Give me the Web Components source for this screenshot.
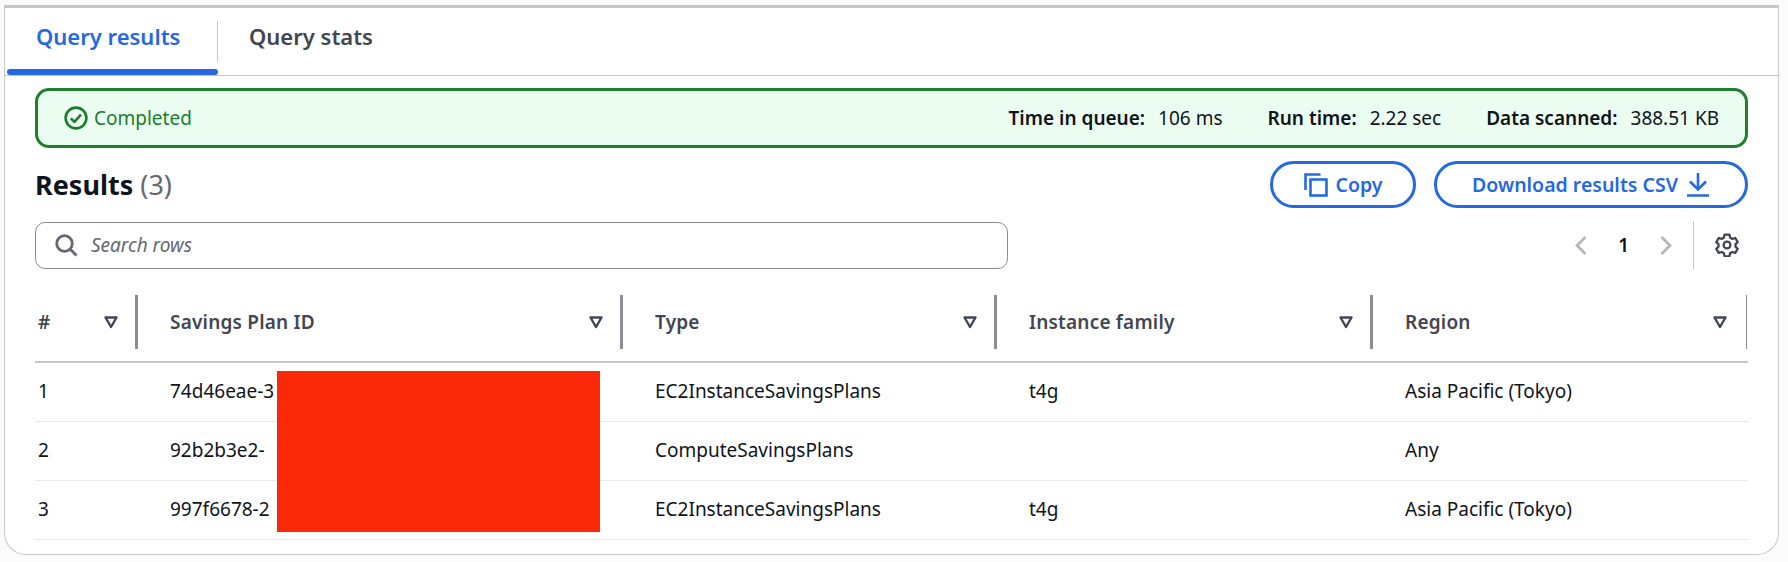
<!DOCTYPE html>
<html lang="en">
<head>
<meta charset="utf-8">
<title>Query results</title>
<style>
  html, body { margin: 0; background: #fbfbfb; }
  body { font-family: "Noto Sans", "Open Sans", sans-serif; color: #0f141a; }
</style>
</head>
<body>
<results-panel>
  <query-tabs slot="tabs">
    <tab-item active>Query results</tab-item>
    <tab-item>Query stats</tab-item>
  </query-tabs>
  <status-flash>
    <flash-stat label="Time in queue:">106 ms</flash-stat>
    <flash-stat label="Run time:">2.22 sec</flash-stat>
    <flash-stat label="Data scanned:">388.51 KB</flash-stat>
  </status-flash>
  <results-header count="3">
    <pill-button icon="copy" style="width:146px">Copy</pill-button>
    <pill-button icon="download" style="width:314px">Download results CSV</pill-button>
  </results-header>
  <table-toolbar></table-toolbar>
  <results-table></results-table>
</results-panel>

<script>
// small helper, every component goes through it
function shadow(el, html) {
  const root = el.attachShadow({ mode: "open" });
  const t = document.createElement("template");
  t.innerHTML = html;
  root.append(t.content.cloneNode(true));
  return root;
}

class ResultsPanel extends HTMLElement {
  constructor() {
    super();
    shadow(this, `
      <style>
        :host {
          display: block; box-sizing: border-box;
          width: 1775px; height: 550px; margin: 5px 0 0 4px;
          background: #fff;
          border: 1px solid #c6c6cd; border-top: 3px solid #c6c6cd;
          border-radius: 0 0 22px 22px;
          position: relative;
        }
      </style>
      <slot name="tabs"></slot>
      <slot></slot>
    `);
  }
}

class QueryTabs extends HTMLElement {
  constructor() {
    super();
    shadow(this, `
      <style>
        :host {
          display: flex; height: 68px; box-sizing: border-box;
          padding-left: 2px; border-bottom: 1px solid #c6c6cd;
        }
      </style>
      <slot></slot>
    `);
  }
}

class TabItem extends HTMLElement {
  constructor() {
    super();
    shadow(this, `
      <style>
        :host {
          display: flex; align-items: center; box-sizing: border-box;
          height: 67px; padding: 0 0 12px 0;
          font-size: 22px; font-weight: 600; color: #424650;
          position: relative;
        }
        :host(:first-child) { width: 211px; padding-left: 29px; }
        :host(:not(:first-child)) { padding-left: 31px; }
        :host([active]) { color: #2469e0; }
        :host([active])::before {
          content: ""; position: absolute; left: 0; right: 0; bottom: 0;
          height: 6px; border-radius: 3px; background: #2469e0;
        }
        :host([active])::after {
          content: ""; position: absolute; right: 0; top: 13px;
          height: 41px; width: 1px; background: #c6c6cd;
        }
      </style>
      <slot></slot>
    `);
  }
}

class StatusFlash extends HTMLElement {
  constructor() {
    super();
    shadow(this, `
      <style>
        :host {
          display: flex; align-items: center; box-sizing: border-box;
          height: 60px; margin: 12px 30px 0 30px; padding: 0 26px 0 26px;
          background: #ebfdf0; border: 3px solid #1f7f2e; border-radius: 14px;
          font-size: 19px; color: #0f141a;
        }
        .done { display: flex; align-items: center; gap: 6px; color: #1b7d2b; flex: 1; }
        svg { width: 24px; height: 24px; display: block; }
        .stats { display: flex; gap: 45px; }
      </style>
      <div class="done">
        <svg viewBox="0 0 24 24" fill="none" stroke="#1b7d2b" stroke-width="2.6">
          <circle cx="12" cy="12" r="10.4"/>
          <path d="M6.8 12.3l3.6 3.6 6.6-7.2" stroke-linejoin="round"/>
        </svg>
        <span>Completed</span>
      </div>
      <div class="stats"><slot></slot></div>
    `);
  }
}

class FlashStat extends HTMLElement {
  constructor() {
    super();
    shadow(this, `
      <style>
        :host { display: inline-flex; gap: 13px; white-space: nowrap; }
        b { font-weight: 600; }
      </style>
      <b>${this.getAttribute("label")}</b><span><slot></slot></span>
    `);
  }
}

class ResultsHeader extends HTMLElement {
  constructor() {
    super();
    shadow(this, `
      <style>
        :host {
          display: flex; align-items: center; height: 47px;
          margin: 13px 30px 0 30px; gap: 18px;
        }
        h2 { flex: 1; margin: 0; font-size: 27px; font-weight: 700; color: #0f141a; }
        h2 span { font-weight: 400; color: #656871; }
      </style>
      <h2>Results <span>(${this.getAttribute("count")})</span></h2>
      <slot></slot>
    `);
  }
}

const pillIcons = {
  copy: `<svg viewBox="0 0 24 24" fill="none" stroke="#2469e0" stroke-width="2.6">
      <path d="M1.5 17V1.5h15"/><rect x="6.5" y="6.5" width="16" height="16"/></svg>`,
  download: `<svg viewBox="0 0 24 24" fill="none" stroke="#2469e0" stroke-width="2.6">
      <path d="M12 0v15M4 8.5l8 8 8-8M1 22.5h22"/></svg>`
};

class PillButton extends HTMLElement {
  constructor() {
    super();
    const icon = this.getAttribute("icon");
    shadow(this, `
      <style>
        :host {
          display: flex; align-items: center; justify-content: center; box-sizing: border-box;
          height: 47px; gap: 8px; flex: none;
          border: 3px solid #2469e0; border-radius: 24px; background: #fff;
          color: #2469e0; font-size: 19.5px; font-weight: 600; white-space: nowrap;
        }
        svg { width: 24px; height: 24px; display: block; }
        .copy { order: -1; margin-right: 5px; }
      </style>
      <span class="${icon}" style="display:contents"></span>
      ${icon === "copy" ? pillIcons.copy : ""}
      <slot></slot>
      ${icon === "download" ? pillIcons.download : ""}
    `);
  }
}

class TableToolbar extends HTMLElement {
  constructor() {
    super();
    shadow(this, `
      <style>
        :host {
          display: flex; align-items: center; height: 48px;
          margin: 13px 30px 0 30px;
        }
        .search {
          width: 973px; height: 47px; box-sizing: border-box;
          display: flex; align-items: center; gap: 13px; padding-left: 19px;
          border: 1px solid #8c8c94; border-radius: 10px;
          font-size: 19px; font-style: italic; color: #656871;
        }
        .search svg { width: 23px; height: 23px; }
        .pager { margin-left: auto; display: flex; align-items: center; height: 48px; }
        .pager span { width: 42px; text-align: center; font-size: 19px; font-weight: 600; margin: 0 21px; width: auto; color: #0f141a; padding: 0 10px; }
        .pager svg.chev { width: 12px; height: 19px; }
        .sep { width: 1px; height: 48px; background: #c6c6cd; margin: 0 21px; }
        .gear { width: 24px; height: 24px; margin-right: 9px; }
      </style>
      <div class="search">
        <svg viewBox="0 0 23 23" fill="none" stroke="#656871" stroke-width="2.8">
          <circle cx="9.5" cy="9.5" r="7.8"/><path d="M15 15l6.5 6.5"/>
        </svg>
        <span>Search rows</span>
      </div>
      <div class="pager">
        <svg class="chev" viewBox="0 0 12 19" fill="none" stroke="#b4b4bb" stroke-width="2.6"><path d="M10.5 1L2 9.5l8.5 8.5"/></svg>
        <span>1</span>
        <svg class="chev" viewBox="0 0 12 19" fill="none" stroke="#b4b4bb" stroke-width="2.6"><path d="M1.5 1L10 9.5 1.5 18"/></svg>
        <div class="sep"></div>
        <svg class="gear" viewBox="0 0 24 24" fill="none" stroke="#424650" stroke-width="2.3" stroke-linejoin="round">
          <circle cx="12" cy="12" r="3.4"/>
          <path d="M9.6 1.6h4.8l.7 3 2.2 1.3 3-.9 2.4 4.1-2.2 2.1v2.5l2.2 2.1-2.4 4.1-3-.9-2.2 1.3-.7 3H9.6l-.7-3-2.2-1.3-3 .9-2.4-4.1 2.2-2.1v-2.5L1.3 9.1l2.4-4.1 3 .9 2.2-1.3z"/>
        </svg>
      </div>
    `);
  }
}

const columns = "103px 485px 374px 376px 374px";
const headers = ["#", "Savings Plan ID", "Type", "Instance family", "Region"];
const rows = [
  ["1", "74d46eae-3", "EC2InstanceSavingsPlans", "t4g", "Asia Pacific (Tokyo)"],
  ["2", "92b2b3e2-", "ComputeSavingsPlans", "", "Any"],
  ["3", "997f6678-2", "EC2InstanceSavingsPlans", "t4g", "Asia Pacific (Tokyo)"]
];

class ResultsTable extends HTMLElement {
  constructor() {
    super();
    const head = headers.map((h, i) => `
      <div class="th${i === 0 ? " first" : ""}${i === 4 ? " last" : ""}">
        <span>${h}</span>
        <svg viewBox="0 0 14 13" fill="none" stroke="#424650" stroke-width="2.4" stroke-linejoin="round"><path d="M1.5 1.5h11L7 11z"/></svg>
      </div>`).join("");
    const body = rows.map(r => `
      <div class="tr">${r.map((c, i) => `<div class="td${i === 0 ? " first" : ""}">${c}</div>`).join("")}</div>`).join("");
    shadow(this, `
      <style>
        :host { display: block; margin: 26px 30px 0 30px; position: relative; }
        .head { display: grid; grid-template-columns: ${columns}; height: 68px; border-bottom: 2px solid #c6c6cd; box-sizing: border-box; }
        .th {
          position: relative; display: flex; align-items: flex-start; padding: 14px 0 0 32px;
          font-size: 19px; font-weight: 600; color: #424650; letter-spacing: .2px;
        }
        .th.first { padding-left: 3px; }
        .th::after {
          content: ""; position: absolute; right: 0; top: 0; width: 3px; height: 54px; background: #8c8c94;
        }
        .th.last::after { width: 1px; }
        .th svg { position: absolute; right: 20px; top: 21px; width: 14px; height: 13px; }
        .tr { display: grid; grid-template-columns: ${columns}; height: 59px; border-bottom: 1px solid #e8e8ec; box-sizing: border-box; }
        .tr:last-of-type { border-bottom: 0; }
        .td { display: flex; align-items: center; padding-left: 32px; font-size: 19px; color: #0f141a; padding-bottom: 3px; }
        .td.first { padding-left: 3px; }
        .redact { position: absolute; left: 242px; top: 76px; width: 323px; height: 161px; background: #f9290a; }
      </style>
      <div class="head">${head}</div>
      ${body}
      <div class="redact"></div>
    `);
  }
}

customElements.define("results-panel", ResultsPanel);
customElements.define("query-tabs", QueryTabs);
customElements.define("tab-item", TabItem);
customElements.define("status-flash", StatusFlash);
customElements.define("flash-stat", FlashStat);
customElements.define("results-header", ResultsHeader);
customElements.define("pill-button", PillButton);
customElements.define("table-toolbar", TableToolbar);
customElements.define("results-table", ResultsTable);
</script>
</body>
</html>
